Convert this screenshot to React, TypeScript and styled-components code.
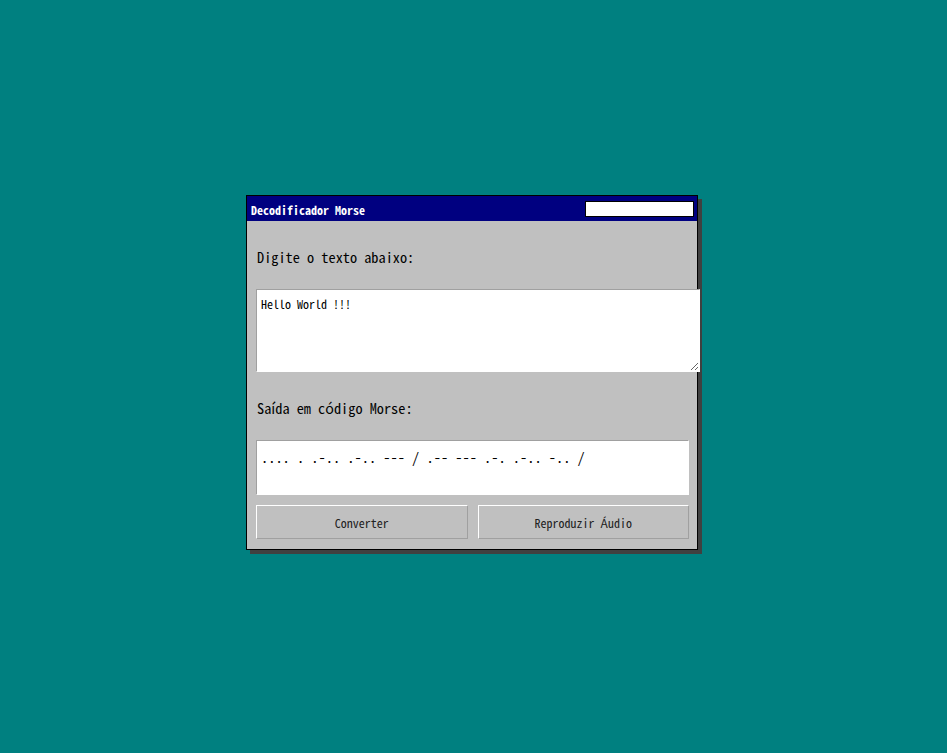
import React, { useState } from "react";
import styled, { createGlobalStyle } from "styled-components";

const FONT = `"Noto Sans Mono CJK KR", "DejaVu Sans Mono", monospace`;

const Global = createGlobalStyle`
  html, body { margin: 0; padding: 0; }
  body {
    background: #008080;
    font-family: ${FONT};
  }
`;

const Desktop = styled.div`
  min-height: 100vh;
  display: flex;
  align-items: center;
  justify-content: center;
  padding-right: 3px;
  padding-bottom: 8px;
  box-sizing: border-box;
`;

const Window = styled.div`
  width: 450px;
  background: #c0c0c0;
  border: 1px solid #000;
  box-shadow: 4px 4px 0 #404040;
  display: flex;
  flex-direction: column;
`;

const TitleBar = styled.div`
  height: 25px;
  background: #000080;
  display: flex;
  align-items: center;
  justify-content: space-between;
  padding: 0 3px 0 4px;
`;

const Title = styled.span`
  color: #fff;
  font-weight: bold;
  font-size: 12px;
  font-family: ${FONT};
  margin-top: 2px;
`;

const TitleField = styled.div`
  width: 107px;
  height: 14px;
  background: #fff;
  border: 1px solid #000;
`;

const Body = styled.div`
  padding: 0 8px 10px 9px;
  display: flex;
  flex-direction: column;
`;

const Label = styled.label`
  display: block;
  font-family: ${FONT};
  font-size: 14.3px;
  line-height: 20px;
  color: #000;
  margin: 26px 0 22px 1px;
`;

const Input = styled.textarea`
  width: 100%;
  height: 72px;
  padding: 6px 5px 3px 4px;
  margin: 0;
  font-family: ${FONT};
  font-size: 12px;
  line-height: 16px;
  color: #000;
  background: #fff;
  border-style: solid;
  border-width: 1px;
  border-color: #a0a0a0 #fff #fff #a0a0a0;
  outline: none;
`;

const Output = styled.div`
  height: 55px;
  padding: 6px 4px;
  box-sizing: border-box;
  font-family: ${FONT};
  font-size: 14.4px;
  line-height: 20px;
  color: #000;
  background: #fff;
  border-style: solid;
  border-width: 1px;
  border-color: #a0a0a0 #fff #fff #a0a0a0;
  white-space: pre;
`;

const Actions = styled.div`
  display: grid;
  grid-template-columns: 1fr 1fr;
  gap: 10px;
  margin-top: 10px;
`;

const Button = styled.button`
  height: 34px;
  background: #c0c0c0;
  border-style: solid;
  border-width: 1px;
  border-color: #fff #a0a0a0 #a0a0a0 #fff;
  font-family: ${FONT};
  font-size: 12px;
  color: #222;
  padding: 0;
  cursor: pointer;
`;

export default function App() {
  const [text, setText] = useState("Hello World !!!");
  return (
    <>
      <Global />
      <Desktop>
        <Window>
          <TitleBar>
            <Title>Decodificador Morse</Title>
            <TitleField />
          </TitleBar>
          <Body>
            <Label>Digite o texto abaixo:</Label>
            <Input value={text} onChange={(e) => setText(e.target.value)} />
            <Label>Saída em código Morse:</Label>
            <Output>.... . .-.. .-.. --- / .-- --- .-. .-.. -.. /</Output>
            <Actions>
              <Button>Converter</Button>
              <Button>Reproduzir Áudio</Button>
            </Actions>
          </Body>
        </Window>
      </Desktop>
    </>
  );
}
